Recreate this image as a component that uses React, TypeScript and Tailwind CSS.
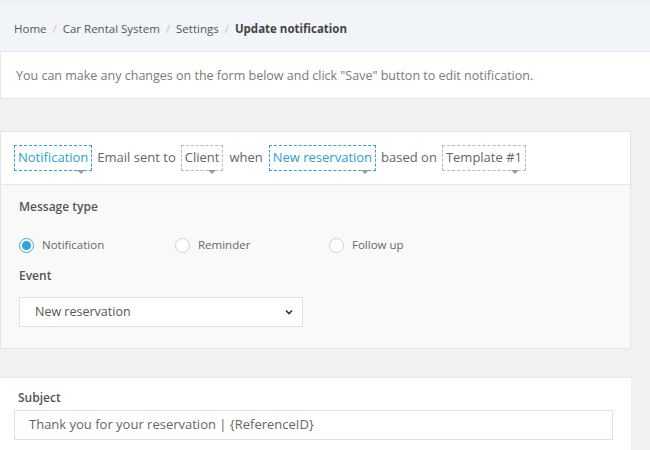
import React from "react";

function Pill({ children, blue }: { children: React.ReactNode; blue?: boolean }) {
  return (
    <span
      className={
        "relative inline-flex items-center h-[26px] px-[3px] border border-dashed " +
        (blue ? "border-[#2aa3d8] text-[#2b9fd3]" : "border-[#b9b9b9] text-[#666]")
      }
    >
      {children}
      <span className="absolute right-[6px] bottom-[-4px] w-0 h-0 border-l-[4px] border-r-[4px] border-t-[4px] border-l-transparent border-r-transparent border-t-[#9a9a9a]" />
    </span>
  );
}

function Radio({ checked, label }: { checked?: boolean; label: string }) {
  return (
    <div className="flex items-center gap-[8px]">
      {checked ? (
        <span className="w-[15px] h-[15px] rounded-full border border-[#3aa8df] bg-white flex items-center justify-center">
          <span className="w-[9px] h-[9px] rounded-full bg-[#2ea3dc]" />
        </span>
      ) : (
        <span className="w-[15px] h-[15px] rounded-full border border-[#cfcfcf] bg-white" />
      )}
      <span className="text-[11.5px] text-[#666]">{label}</span>
    </div>
  );
}

export default function App() {
  return (
    <div
      className="min-h-screen bg-[#f1f1f3] pt-[4px]"
      style={{ fontFamily: '"Open Sans", "Noto Sans", sans-serif' }}
    >
      <div className="h-[48px] bg-[#f1f4f9] border-b border-[#e3e6ea] px-[14px] pt-[2px] flex items-center text-[11.5px] text-[#555]">
        <span>Home</span>
        <span className="mx-[6px] text-[#c4c4c4]">/</span>
        <span>Car Rental System</span>
        <span className="mx-[6px] text-[#c4c4c4]">/</span>
        <span>Settings</span>
        <span className="mx-[6px] text-[#c4c4c4]">/</span>
        <span className="font-bold text-[#444]">Update notification</span>
      </div>
      <div className="h-[47px] bg-white border-b border-l border-[#e6e6e6] px-[15px] pt-[3px] flex items-center text-[12.5px] text-[#7a7a7a]">
        You can make any changes on the form below and click "Save" button to edit notification.
      </div>

      <div className="mt-[32px] w-[631px] bg-white border border-[#e5e5e5]">
        <div className="h-[52px] px-[13px] flex items-center text-[13px] text-[#666]">
          <Pill blue>Notification</Pill>
          <span className="mx-[5px]">Email sent to</span>
          <Pill>Client</Pill>
          <span className="mx-[6px]">when</span>
          <Pill blue>New reservation</Pill>
          <span className="mx-[5px]">based on</span>
          <Pill>Template #1</Pill>
        </div>
        <div className="h-[164px] bg-[#f9f9f9] border-t border-[#e8e8e8] px-[18px] pt-[13px]">
          <div className="text-[12px] font-semibold text-[#555]">Message type</div>
          <div className="mt-[21px] flex items-center h-[16px]">
            <div className="w-[156px]">
              <Radio checked label="Notification" />
            </div>
            <div className="w-[154px]">
              <Radio label="Reminder" />
            </div>
            <Radio label="Follow up" />
          </div>
          <div className="mt-[14px] text-[12px] font-semibold text-[#555]">Event</div>
          <div className="mt-[12px] w-[284px] h-[30px] bg-white border border-[#e2e2e2] flex items-center justify-between pl-[15px] pr-[8px] text-[12.5px] text-[#555]">
            <span>New reservation</span>
            <svg width="10" height="10" viewBox="0 0 10 10">
              <path d="M2 3.5 L5 6.5 L8 3.5" fill="none" stroke="#333" strokeWidth="1.6" />
            </svg>
          </div>
        </div>
      </div>

      <div className="mt-[28px] w-[631px] bg-white border-t border-[#e8e8e8] px-[14px] pt-[11px] pb-[20px]">
        <div className="pl-[4px] text-[12px] font-semibold text-[#555]">Subject</div>
        <div className="mt-[3px] w-[599px] h-[30px] bg-white border border-[#e2e2e2] flex items-center px-[14px] text-[13px] text-[#666]">
          Thank you for your reservation | {"{ReferenceID}"}
        </div>
      </div>
    </div>
  );
}
